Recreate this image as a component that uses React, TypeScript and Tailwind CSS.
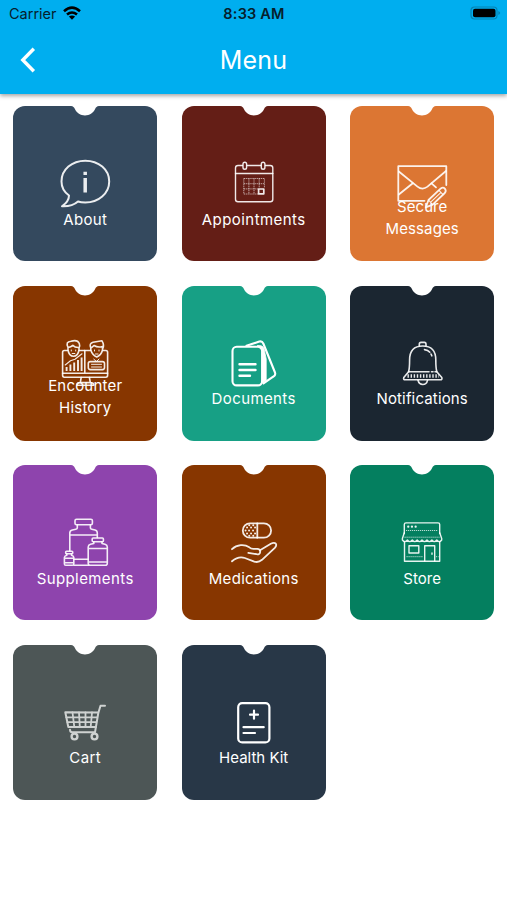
import type { ReactNode } from 'react'
import clsx from 'clsx'

interface MenuItem {
    label: string
    color: string
    icon: ReactNode
    tracking: string
    lines?: string[]
}

function Icon({ children, className = 'text-white/90', stroke = 1.5 }: { children: ReactNode; className?: string; stroke?: number }) {
    return (
        <svg
            viewBox="0 0 52 52"
            className={clsx('w-[52px] h-[52px] shrink-0 overflow-visible', className)}
            fill="none"
            stroke="currentColor"
            strokeWidth={stroke}
            strokeLinecap="round"
            strokeLinejoin="round"
        >
            {children}
        </svg>
    )
}

const AboutIcon = () => (
    <Icon stroke={2}>
        <path d="M10 38.5C5 35 2.5 30 2.5 24.5C2.5 12.5 13 3.7 26.3 3.7S50.2 12.5 50.2 24.5S39.5 45.5 26.3 45.5C24 45.5 21 45.2 19 44.5C15 48 9 49.6 3 49.3C7 46.5 10 43 10 38.5Z" />
        <path d="M26.2 14.8V18M26.2 21V35.5" strokeWidth="3.5" strokeLinecap="butt" />
    </Icon>
)

const CalendarIcon = () => (
    <Icon stroke={1.4}>
        <rect x="7.5" y="8.5" width="37.3" height="36.3" rx="2.5" />
        <path d="M7.5 16.5H44.8" />
        <rect x="15" y="5.3" width="3.6" height="7" rx="1.8" fill="#641e16" />
        <rect x="33.3" y="5.3" width="3.6" height="7" rx="1.8" fill="#641e16" />
        <path
            d="M15.8 21.5H36.4M15.8 26.7H36.4M15.8 31.9H31M15.8 37H31M15.8 21.5V37M20.9 21.5V37M26 21.5V37M31.2 21.5V31M36.4 21.5V31"
            strokeWidth="0.9"
            strokeDasharray="1.2 0.7"
            strokeLinecap="butt"
            opacity="0.75"
        />
        <rect x="30.6" y="32" width="5.2" height="4.8" strokeWidth="1.7" />
    </Icon>
)

const MailIcon = () => (
    <Icon stroke={1.8}>
        <path d="M50.3 28V9.2H2.3V43.8H28.5" />
        <path d="M2.8 14.5L21.5 29.6Q26.5 33.5 31.5 29.6L50 14" />
        <path d="M2.8 37.5L16.8 26.3M35.5 26.3L40 30.3" />
        <path d="M32.5 43L44.8 31.4Q47.2 29.8 49 31.8Q50.6 34 48.8 36L36.6 47.6L29.8 50.3Z" />
        <path d="M32.5 43L36.6 47.6M43 33.3L47 37.6M35 44.8L44.8 35.6" strokeWidth="1.1" />
    </Icon>
)

const EncounterIcon = () => (
    <Icon stroke={1.6}>
        <path d="M8.4 13.5H5.3Q3.6 13.5 3.6 15.3V38.3Q3.6 40.2 5.3 40.2H46.9Q48.6 40.2 48.6 38.3V15.3Q48.6 13.5 46.9 13.5H44M20.3 13.5H31.5" />
        <path d="M3.6 36.2H48.6M25.8 13.5V36" />
        <path d="M9 10.5Q6.2 4.5 12 4.2Q18.5 2.2 20.3 6.5Q21.2 9 20 11M9 10.5V13Q10 19.2 14.5 19.2T20 13V10.5Q16 10.8 13.8 8.3Q12 10 9 10.5" />
        <path d="M31.8 11Q29.8 6.5 34 5.2L43 3.8Q45.5 8 43.8 11.5M31.8 11V13Q33.3 18 37.8 20Q42.3 18 43.5 13V9.5Q39 11 35 8.5Q33.5 10.2 31.8 11" />
        <path d="M12.3 13V14M16.7 13V14M35.5 13V14M40 13V14M13.2 16.5H15.8M36.5 17H39" strokeWidth="1" />
        <path d="M7.6 34V30M11.4 34V27.5M15.2 34V25.5M19 34V23M22.6 34V20.5" strokeWidth="1.9" strokeLinecap="butt" />
        <path d="M6.2 28L11.5 23.8L16 22.2L23 16.8" strokeWidth="1.1" />
        <rect x="29.3" y="24.6" width="16.2" height="8" rx="2" />
        <path d="M32.5 27.3H42.5M32.5 30H42.5M34.8 22.2L37.5 24.5L40 22" strokeWidth="1" />
        <path d="M22.2 40.5L21.3 45.5H31.3L30.4 40.5M17.8 48.3Q17.8 45.7 20.3 45.7H32.4Q34.8 45.7 34.8 48.3Z" />
    </Icon>
)

const DocumentsIcon = () => (
    <Icon stroke={2.1} className="text-white">
        <rect x="4.5" y="9.8" width="29.6" height="38.6" rx="4.2" />
        <path d="M11.5 27.2H27.5M11.5 33H27.5M11.5 38.8H22" strokeWidth="2.4" />
        <path d="M18.5 8.8L31.3 4.6Q34 3.8 35.3 6.5L47 35.5Q47.9 38.3 45.2 39.7L35.5 46.3" />
        <path d="M29.5 8.6Q34.5 7.8 36 11.5L38.2 22V43.5L34.5 46V14Z" fill="currentColor" strokeWidth="0.8" />
    </Icon>
)

const BellIcon = () => (
    <Icon stroke={1.6}>
        <path d="M23.3 9V7.2Q23.3 5.4 25 5.4H28.4Q30 5.4 30 7.2V9" />
        <path d="M12.6 34.8Q13.6 31 13.6 23Q13.6 9 26.7 9T39.8 23Q39.8 31 40.8 34.8" />
        <path d="M12.6 34.8H33M35.5 34.8H37M39 34.8H40.8M12.6 34.8L7.8 40.6Q7 42.8 9.3 42.8H44.3Q46.5 42.8 45.8 40.6L40.8 34.8" />
        <path d="M11.5 39H43" strokeWidth="3.4" strokeDasharray="1.4 1.7" strokeLinecap="butt" />
        <path d="M22 43.3Q23 47.5 26.8 47.5T31.5 43.3" />
        <path d="M28.5 12.6Q32 13 33.8 15.2M35 17L35.8 18.8" />
    </Icon>
)

const BottlesIcon = () => (
    <Icon stroke={1.6}>
        <rect x="16" y="3.3" width="17.4" height="5.5" rx="1.5" />
        <path d="M18.3 8.8V12Q18.3 13 16.8 13.3L13.3 14Q10.8 14.6 10.8 17V35M31.4 8.8V12Q31.4 13 32.8 13.3L36 14Q38.3 14.6 38.3 17V21.5M10.8 19H38.3M15 43.3H29M15 49.3H29.5" />
        <rect x="33.2" y="22" width="11.2" height="3.7" rx="1" />
        <path d="M34.8 25.7V27.5L31.5 28.3Q29.2 29 29.2 31V47.3Q29.2 49.3 31.2 49.3H46.3Q48.3 49.3 48.3 47.3V31Q48.3 29 46 28.3L43 27.5V25.7M29.2 32.5H48.3M29.2 46H48.3" />
        <rect x="6.7" y="35.2" width="7" height="2.5" rx=".8" />
        <path d="M7.8 37.7V39.3Q5.4 40 5.4 41.5V48Q5.4 49.3 6.8 49.3H13.3Q14.8 49.3 14.8 48V41.5Q14.8 40 12.5 39.3V37.7M5.4 42.2H14.8M5.4 46.8H14.8" />
    </Icon>
)

const MedicationIcon = () => (
    <Icon stroke={1.8}>
        <rect x="14.8" y="7.3" width="28.3" height="14.4" rx="7.2" />
        <path d="M29.3 7.3V21.7" />
        <path d="M19 11.5h.1M23 11.5h.1M27 11.5h.1M17.5 14.5h.1M21 14.5h.1M25 14.5h.1M19 17.5h.1M23 17.5h.1M27 17.5h.1M21.2 9.3h.1M25.2 9.3h.1M21.2 19.8h.1M25.2 19.8h.1" strokeWidth="1.9" />
        <path d="M4 33.2C9 28.3 16.5 28 21.3 31.3Q23 32.8 25.3 32.8H29.3Q32.3 33 32.2 35.8Q31.8 38.8 28.5 38.2L20.3 36.8" />
        <path d="M32 34.2L42.8 27.7Q46.3 26 47.8 27.7Q49 29.3 46.8 31.8L34 43.8Q30.3 47 26.3 45.6L16.8 42Q10.5 39.7 4 45.3" />
    </Icon>
)

const StoreIcon = () => (
    <Icon stroke={1.4}>
        <path d="M8.3 17.5V8.5Q8.3 6.9 10 6.9H42Q43.7 6.9 43.7 8.5V17.5" />
        <path d="M12.2 10.7h.1M15.9 10.7h.1M19.6 10.7h.1" strokeWidth="2.2" />
        <path d="M10 14.5H42M8.5 21.2H43.5M10.5 40.7H27M40 40.7H42.5" strokeWidth="1" strokeDasharray="1.2 .8" strokeLinecap="butt" opacity=".8" />
        <path d="M8.3 16.8L6.4 22.5V24Q8.9 27.2 11.4 24Q13.8 27.2 16.3 24Q18.7 27.2 21.2 24Q23.6 27.2 26 24Q28.5 27.2 31 24Q33.4 27.2 35.9 24Q38.3 27.2 40.8 24Q43.2 27.2 45.7 24V22.5L43.7 16.8" />
        <path d="M8.5 26V45.2H43.7V26" />
        <rect x="13" y="29.8" width="9.8" height="7.2" />
        <path d="M28.7 45V29.8H38.7V45M36 37V38.2" />
    </Icon>
)

const CartIcon = () => (
    <Icon stroke={2} className="text-[#cfd2d1]">
        <path d="M46 9.7H41.5L39.3 17L36 36.3H13.5Q11 36.3 11 33.8" />
        <path d="M39 16.6L6.3 16.3L9.3 31H37" />
        <path d="M7.3 21.3H38M8.4 26.2H37M13.5 16.5L15.3 31M20 16.5L20.8 31M26.5 16.5V31M33 16.5L31.7 31" strokeWidth="1.8" />
        <circle cx="15.5" cy="40.5" r="2.9" strokeWidth="2.4" />
        <circle cx="35.5" cy="40.5" r="2.9" strokeWidth="2.4" />
    </Icon>
)

const HealthIcon = () => (
    <Icon stroke={2.2} className="text-white">
        <rect x="10.2" y="7.2" width="31.2" height="39.2" rx="4" />
        <path d="M26 14.7V22.7M22 18.7H30M15.5 31.2H35.7M15.5 37H27" />
    </Icon>
)

const items: MenuItem[] = [
    { label: 'About', color: 'bg-[#34495e]', icon: <AboutIcon />, tracking: 'tracking-[0.3px]' },
    { label: 'Appointments', color: 'bg-[#641e16]', icon: <CalendarIcon />, tracking: 'tracking-[0.45px]' },
    { label: 'Secure Messages', color: 'bg-[#dc7633]', icon: <MailIcon />, tracking: 'tracking-[0.1px]', lines: ['Secure', 'Messages'] },
    { label: 'Encounter History', color: 'bg-[#873600]', icon: <EncounterIcon />, tracking: 'tracking-[0.2px]', lines: ['Encounter', 'History'] },
    { label: 'Documents', color: 'bg-[#17a085]', icon: <DocumentsIcon />, tracking: 'tracking-[0.4px]' },
    { label: 'Notifications', color: 'bg-[#1b2631]', icon: <BellIcon />, tracking: 'tracking-[0.15px]' },
    { label: 'Supplements', color: 'bg-[#8e44ad]', icon: <BottlesIcon />, tracking: 'tracking-[0.4px]' },
    { label: 'Medications', color: 'bg-[#873600]', icon: <MedicationIcon />, tracking: 'tracking-[0.3px]' },
    { label: 'Store', color: 'bg-[#047f5f]', icon: <StoreIcon />, tracking: 'tracking-[0.1px]' },
    { label: 'Cart', color: 'bg-[#4d5656]', icon: <CartIcon />, tracking: 'tracking-[0.4px]' },
    { label: 'Health Kit', color: 'bg-[#283747]', icon: <HealthIcon />, tracking: 'tracking-[0px]' },
]

function StatusBar() {
    return (
        <div className="grid grid-cols-3 items-center h-7 pl-[9px] pr-[6px] text-[#06202c]">
            <div className="flex items-center gap-[6px]">
                <span className="text-[14.5px] leading-none">Carrier</span>
                <svg viewBox="0 0 18 14" className="w-[18px] h-[14px] relative -top-px" fill="none" stroke="#000" strokeWidth="2.6">
                    <path d="M1 5.2Q9-1.8 17 5.2M4 8.6Q9 4.4 14 8.6" />
                    <path d="M5.9 10.6Q9 8.2 12.1 10.6L9 13.8Z" fill="#000" stroke="none" />
                </svg>
            </div>
            <span className="text-[14.5px] leading-none font-semibold text-center tracking-[0.2px] -ml-[2px]">8:33 AM</span>
            <svg viewBox="0 0 31 14" className="w-[31px] h-[14px] justify-self-end relative -top-px">
                <rect x="1" y="1" width="26" height="12" rx="3.5" fill="none" stroke="#0583b3" strokeWidth="1.2" />
                <rect x="3" y="2.8" width="22.5" height="8.4" rx="2" fill="#000" />
                <path d="M28.3 5Q30.2 5.8 30.2 7T28.3 9Z" fill="#0583b3" />
            </svg>
        </div>
    )
}

function Tile({ item }: { item: MenuItem }) {
    return (
        <button type="button" className={clsx('relative flex flex-col items-center h-[155px] pt-[51px] rounded-[12px] overflow-hidden', item.color)}>
            <svg viewBox="0 0 28 10" className="absolute top-0 left-1/2 -translate-x-1/2 w-7 h-[10px]" fill="#fff">
                <path d="M0 0C2.2 0.2 3 1.2 3.9 3C5.8 7 9.5 9.4 14 9.4S22.2 7 24.1 3C25 1.2 25.8 0.2 28 0Z" />
            </svg>
            {item.icon}
            <span className={clsx('relative flex flex-col text-center text-[15px] leading-[22px] text-white', item.tracking, item.lines ? '-mt-[13.4px]' : '-mt-[0.2px]')}>
                {item.lines ? item.lines.map((line) => <span key={line}>{line}</span>) : item.label}
            </span>
        </button>
    )
}

export default function App() {
    return (
        <div className="w-[507px] h-[900px] overflow-hidden bg-white font-[Inter,sans-serif]">
            <header className="relative h-[94px] bg-[#00aeef] shadow-[0_2px_4px_rgba(0,0,0,0.35)]">
                <StatusBar />
                <div className="grid grid-cols-[60px_1fr_60px] items-center h-16">
                    <button type="button" aria-label="Back" className="pl-5">
                        <svg viewBox="0 0 16 26" className="w-4 h-[26px]" fill="none" stroke="#fff" strokeWidth="3.4">
                            <path d="M13.8 1.8L2.8 13L13.8 24.2" />
                        </svg>
                    </button>
                    <h1 className="text-center text-white text-[25px] leading-none tracking-[0.2px]">Menu</h1>
                </div>
            </header>
            <main className="grid grid-cols-3 gap-x-[24.3px] gap-y-[24.5px] pl-[13.1px] pr-[12.7px] pt-3">
                {items.map((item) => <Tile key={item.label} item={item} />)}
            </main>
        </div>
    )
}
